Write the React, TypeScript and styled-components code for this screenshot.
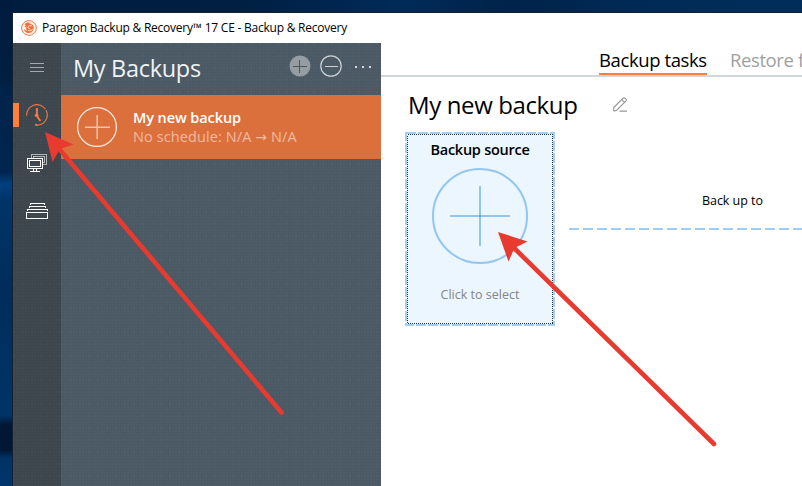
import React from "react";
import styled, { createGlobalStyle } from "styled-components";

const GlobalStyle = createGlobalStyle`
  * { box-sizing: border-box; }
  body { margin: 0; overflow: hidden; font-family: "Open Sans", "Noto Sans", sans-serif; }
`;

const Desktop = styled.div`
  position: relative;
  width: 802px;
  height: 486px;
  padding: 13px 0 0 13px;
  overflow: hidden;
  background:
    linear-gradient(180deg, #001b3d 0, #001f42 80px, #00234a 88px, #00264f 172px, #004080 184px, #003468 200px, #002d5c 290px, #003061 345px, #003467 415px, #001735 425px, #001735 450px, #003265 458px, #00366d 486px) 0 0 / 13px 100% no-repeat,
    linear-gradient(90deg, #001d3f 0, #001f43 240px, #002b58 400px, #00234a 510px, #002b57 650px, #002d5a 802px);
`;

const Window = styled.div`
  display: flex;
  flex-direction: column;
  width: 789px;
  height: 473px;
  background: #fff;
  box-shadow: 0 0 0 1px #14202e;
`;

const TitleBar = styled.header`
  display: flex;
  align-items: center;
  height: 30px;
  padding-left: 8px;
  gap: 5px;
  flex: none;
`;

const Label = styled.span<{ $size: number; $spacing?: number; $weight?: number; $color?: string; $line?: number }>`
  display: block;
  white-space: pre;
  font-size: ${(p) => p.$size}px;
  line-height: ${(p) => p.$line ?? 20}px;
  letter-spacing: ${(p) => p.$spacing ?? 0}px;
  font-weight: ${(p) => p.$weight ?? 400};
  color: ${(p) => p.$color ?? "#000"};
`;

const Arrow = styled.span`
  font-family: "DejaVu Sans", sans-serif;
  font-size: 14px;
  line-height: 1;
`;

const Body = styled.div`
  display: flex;
  flex: 1;
  min-height: 0;
`;

const texture = `
  radial-gradient(circle at 1px 1px, rgba(255,255,255,0.04) 0.6px, transparent 0.9px) 0 0 / 9px 12px,
  radial-gradient(circle at 1px 1px, rgba(255,255,255,0.025) 0.6px, transparent 0.9px) 0 0 / 3px 3px,
  radial-gradient(circle at 1px 1px, rgba(0,0,0,0.04) 0.6px, transparent 0.9px) 1px 2px / 15px 9px`;

const Rail = styled.nav`
  display: flex;
  flex-direction: column;
  width: 48px;
  flex: none;
  background: ${texture}, #3d454d;
`;

const RailItem = styled.div<{ $active?: boolean }>`
  display: flex;
  align-items: center;
  justify-content: center;
  height: 48px;
  background: ${(p) => (p.$active ? "linear-gradient(#ff7e3e, #ff7e3e) 0 12px / 6px 24px no-repeat" : "none")};
`;

const BackupPanel = styled.aside`
  width: 320px;
  flex: none;
  background: ${texture}, #4a5964;
`;

const PanelHeader = styled.div`
  display: flex;
  align-items: center;
  height: 52px;
  padding: 0 8px 3px 12px;
`;

const PanelActions = styled.div`
  display: flex;
  align-items: center;
  margin-left: auto;
  padding-bottom: 4px;
  gap: 9px;
`;

const BackupRow = styled.div`
  display: flex;
  align-items: center;
  height: 64px;
  padding-left: 16px;
  gap: 16px;
  background: #dc703d;
`;

const Main = styled.main`
  flex: 1;
  min-width: 0;
  overflow: hidden;
`;

const Tabs = styled.div`
  display: flex;
  height: 34px;
  padding-left: 218px;
  gap: 23px;
  border-bottom: 2px solid #d1d5d9;
`;

const Tab = styled.div<{ $active?: boolean }>`
  flex: none;
  width: 108px;
  height: 32px;
  padding-top: 4px;
  border-bottom: ${(p) => (p.$active ? "2px solid #ff7e3e" : "none")};
`;

const Heading = styled.div`
  display: flex;
  align-items: center;
  height: 55px;
  padding: 1px 0 0 27px;
  gap: 35px;
`;

const HeadingName = styled.div`
  width: 170px;
`;

const EditButton = styled.div`
  height: 15px;
  margin-top: -5px;
`;

const Flow = styled.div`
  display: flex;
  padding-left: 24px;
`;

const SourceCard = styled.div`
  position: relative;
  display: flex;
  flex-direction: column;
  align-items: center;
  width: 150px;
  height: 194px;
  padding-top: 8px;
  background: #ebf6fe;
`;

const CardOutline = styled.svg`
  position: absolute;
  inset: 0;
`;

const CardIcon = styled.div`
  height: 96px;
  margin: 8px 0 21px;
`;

const Connector = styled.div`
  display: flex;
  flex-direction: column;
  width: 233px;
  margin-left: 14px;
  padding-top: 59px;
`;

const ConnectorLabel = styled.div`
  padding-left: 133px;
`;

const DashLine = styled.div`
  height: 2px;
  margin-top: 17px;
  background: repeating-linear-gradient(90deg, #9fccf2 0 10px, transparent 10px 14px);
`;

const Pointers = styled.svg`
  position: absolute;
  inset: 0;
`;

const Logo = () => (
  <svg width="16" height="16" viewBox="0 0 16 16" fill="none">
    <circle cx="8" cy="8" r="7.4" fill="#fff4ee" stroke="#f0773f" strokeWidth="1" />
    <path d="M3.6 4.3C5 2.5 8 1.9 10.6 3.1c-1-.1-1.9.1-2.5.6 2.3-.1 4.3 1.1 4.7 3.2.5 3.2-1.9 5.9-5 6-2.8.1-4.8-1.7-4.9-4.2 1 1.5 2.3 2 3.3 1.5-1.3-.8-1.5-2.4-.7-3.8-.9.1-1.5.4-2 1 .1-1 .6-1.6 1.3-2.2Z" fill="#f0703a" />
    <path d="M10.9 5.9c-1.1-.8-3.4-.4-3.7 1.3-.2 1.1.8 1.9 1.8 1.5M11.8 8.8c-.8 1.8-2.7 2.5-4.5 1.6" stroke="#fff0e6" strokeWidth=".9" />
  </svg>
);

const MenuIcon = () => (
  <svg width="16" height="12" viewBox="0 0 16 12" shapeRendering="crispEdges">
    <path d="M1 2.5h14M1 6.5h14M1 10.5h14" stroke="#a4a9ad" />
  </svg>
);

const ClockIcon = () => (
  <svg width="22" height="22" viewBox="0 0 22 22" fill="none" stroke="#f3773e">
    <path d="M.7 11.7A10.3 10.3 0 0 1 19.5 5.2" strokeWidth="1.1" />
    <path d="M20.1 6.3A10.2 10.2 0 0 1 10.5 21.1" strokeWidth="1.2" />
    <path d="M10.9 4v8l3.5 5" strokeWidth="2" />
    <circle cx="10.7" cy="11.3" r="1.9" fill="#f3773e" stroke="none" />
    <path d="m9.8 19.9 1.6 1.1-1.6 1Z" fill="#f3773e" />
  </svg>
);

const ComputersIcon = () => (
  <svg width="22" height="20" viewBox="0 0 22 20" fill="none" stroke="#fff" shapeRendering="crispEdges">
    <g stroke="#b2b6b9">
      <path d="M5.5 5V1.5h15v10H17" />
      <path d="M7.5 5V3.5h11v6H17" />
    </g>
    <rect x="1.5" y="5.5" width="15" height="10" />
    <rect x="3.5" y="7.5" width="11" height="6" />
    <path d="M7.5 16v2M10.5 16v2M4 18.5h10" />
  </svg>
);

const ArchiveIcon = () => (
  <svg width="22" height="18" viewBox="0 0 22 18" fill="none" stroke="#fff" shapeRendering="crispEdges">
    <path d="M4 3V1.5h14V3M3 6V4.5h16V6M1 9V7.5h20V9" />
    <rect x=".5" y="10.5" width="21" height="6" />
  </svg>
);

const AddIcon = () => (
  <svg width="22" height="22" viewBox="0 0 22 22">
    <circle cx="11" cy="11" r="10.5" fill="#959da3" />
    <path d="M4 11.5h14M10.5 4.5v13" stroke="#4a5862" shapeRendering="crispEdges" />
  </svg>
);

const RemoveIcon = () => (
  <svg width="22" height="22" viewBox="0 0 22 22" fill="none">
    <circle cx="11" cy="11" r="10.2" stroke="#cdd1d4" strokeWidth="1.2" />
    <path d="M4.5 11.5h13" stroke="#cdd1d4" shapeRendering="crispEdges" />
  </svg>
);

const MoreIcon = () => (
  <svg width="22" height="22" viewBox="0 0 22 22" fill="#d6d9db" shapeRendering="crispEdges">
    <path d="M4 11h2v2H4zM11 11h2v2h-2zM18 11h2v2h-2z" />
  </svg>
);

const TaskIcon = () => (
  <svg width="40" height="40" viewBox="0 0 40 40" fill="none">
    <circle cx="20" cy="20" r="19.4" stroke="#fbe9e0" strokeWidth="1.2" />
    <path d="M8 20.2h25M20.2 8v24" stroke="#f3c4ad" strokeWidth="1.5" />
  </svg>
);

const SourceIcon = () => (
  <svg width="96" height="96" viewBox="0 0 96 96" fill="none" stroke="#92c6f0" strokeWidth="2">
    <circle cx="48" cy="48" r="47" />
    <path d="M18 48h60M48 18v60" />
    <path d="M47 48h2" stroke="#5ba9e6" />
  </svg>
);

const EditIcon = () => (
  <svg width="15" height="15" viewBox="0 0 15 15" fill="none" stroke="#979797" strokeWidth="1.1">
    <path d="M.7 14.1v-3.5L10.3 1q.7-.6 1.4 0l1.4 1.4q.6.7 0 1.4L3.7 13.2.7 14.1M8.7 2.6l2.8 2.8M6.5 14.1H14" />
  </svg>
);

export default function App() {
  return (
    <>
      <GlobalStyle />
      <Desktop>
        <Window>
          <TitleBar>
            <Logo />
            <Label $size={12} $spacing={-0.23}>Paragon Backup &amp; Recovery™ 17 CE - Backup &amp; Recovery</Label>
          </TitleBar>
          <Body>
            <Rail>
              <RailItem><MenuIcon /></RailItem>
              <RailItem $active><ClockIcon /></RailItem>
              <RailItem><ComputersIcon /></RailItem>
              <RailItem><ArchiveIcon /></RailItem>
            </Rail>
            <BackupPanel>
              <PanelHeader>
                <Label $size={23.5} $spacing={-0.3} $line={30} $color="#f0f2f3">My Backups</Label>
                <PanelActions>
                  <AddIcon />
                  <RemoveIcon />
                  <MoreIcon />
                </PanelActions>
              </PanelHeader>
              <BackupRow>
                <TaskIcon />
                <div>
                  <Label $size={14.5} $weight={600} $spacing={-0.1} $line={19} $color="#fff">My new backup</Label>
                  <Label $size={14.5} $spacing={0.1} $line={19} $color="#f0baa0">No schedule: N/A <Arrow>→</Arrow> N/A</Label>
                </div>
              </BackupRow>
            </BackupPanel>
            <Main>
              <Tabs>
                <Tab $active><Label $size={18.5} $spacing={-0.4} $line={26}>Backup tasks</Label></Tab>
                <Tab><Label $size={18.5} $spacing={-0.4} $line={26} $color="#a0a0a0">Restore files</Label></Tab>
              </Tabs>
              <Heading>
                <HeadingName><Label $size={24} $spacing={-0.38} $line={34}>My new backup</Label></HeadingName>
                <EditButton><EditIcon /></EditButton>
              </Heading>
              <Flow>
                <SourceCard>
                  <CardOutline width="150" height="194" viewBox="0 0 150 194" fill="none" shapeRendering="crispEdges">
                    <rect x="1" y="1" width="148" height="192" stroke="#a3cef2" strokeWidth="2" strokeDasharray="10 2" />
                    <rect x="2.5" y="2.5" width="145" height="189" stroke="#243447" strokeDasharray="1 1" />
                  </CardOutline>
                  <Label $size={14.5} $weight={600} $spacing={-0.25}>Backup source</Label>
                  <CardIcon><SourceIcon /></CardIcon>
                  <Label $size={12.5} $color="#858585">Click to select</Label>
                </SourceCard>
                <Connector>
                  <ConnectorLabel><Label $size={12.5} $spacing={-0.05}>Back up to</Label></ConnectorLabel>
                  <DashLine />
                </Connector>
              </Flow>
            </Main>
          </Body>
        </Window>
        <Pointers width="802" height="486" viewBox="0 0 802 486" fill="#e73b30" stroke="#e73b30">
          <path d="M58 147.5 281.5 412.5M511 245l203 199" strokeWidth="4.6" strokeLinecap="round" />
          <path d="m45 132 28.5 12.5L60 149l-7.5 13ZM498 232l29.5 9.5-13 6.5-6 13.5Z" stroke="none" />
        </Pointers>
      </Desktop>
    </>
  );
}
